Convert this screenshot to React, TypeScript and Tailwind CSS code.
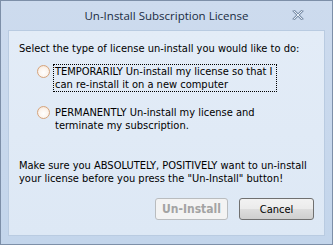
import React from 'react';

const Radio: React.FC = () => (
  <span className="mt-[1px] block h-[13px] w-[13px] shrink-0 rounded-full border border-[#d6a47c] bg-[radial-gradient(circle_at_50%_60%,#ffffff_0%,#fbf3ec_55%,#f0d8c4_100%)]" />
);

export default function App() {
  return (
    <div className="flex h-[245px] w-[333px] flex-col border border-[#7d8fa8] bg-[linear-gradient(#cddbee,#c3d5eb)] font-['DejaVu_Sans_Condensed','DejaVu_Sans',sans-serif] font-stretch-condensed text-[11px] leading-[13px] text-black">
      <div className="relative flex h-[29px] shrink-0 items-center justify-center">
        <span className="font-['Open_Sans',sans-serif] font-stretch-normal text-[11.5px] text-[#1a2b42]">Un-Install Subscription License</span>
        <svg className="absolute right-[28px] top-[9px]" width="12" height="10" viewBox="0 0 12 10">
          <path d="M2 1 L10 9 M10 1 L2 9" stroke="#7f93ad" strokeWidth="2.6" strokeLinecap="square" />
          <path d="M2 1 L10 9 M10 1 L2 9" stroke="#e8eef6" strokeWidth="1" strokeLinecap="square" />
        </svg>
      </div>
      <div className="mx-[7px] mb-[8px] flex flex-1 flex-col border border-[#b9cbe1] bg-[linear-gradient(#e3ecf7,#dde8f5)] px-[10px] pt-[11px]">
        <p className="whitespace-nowrap">Select the type of license un-install you would like to do:</p>
        <div className="mt-[9px] flex gap-[3px] pl-[18px]">
          <Radio />
          <p className="whitespace-nowrap border border-dotted border-black px-[1px] pr-[3px]">
            TEMPORARILY Un-install my license so that I
            <br />
            can re-install it on a new computer
          </p>
        </div>
        <div className="mt-[13px] flex gap-[3px] pl-[18px]">
          <Radio />
          <p className="whitespace-nowrap border border-transparent px-[1px]">
            PERMANENTLY Un-install my license and
            <br />
            terminate my subscription.
          </p>
        </div>
        <p className="mt-[26px] whitespace-nowrap">
          Make sure you ABSOLUTELY, POSITIVELY want to un-install
          <br />
          your license before you press the "Un-Install" button!
        </p>
        <div className="mt-[13px] flex justify-end gap-[11px]">
          <button className="h-[22px] w-[73px] rounded-[3px] border border-[#b9bcbf] bg-[#f3f3f3] text-[12px] font-bold text-[#a3a3a3]">
            Un-Install
          </button>
          <button className="h-[22px] w-[75px] rounded-[3px] border border-[#707070] bg-[linear-gradient(#f2f2f2_0%,#ebebeb_50%,#dddddd_51%,#cfcfcf_100%)] text-[11px] text-black">
            Cancel
          </button>
        </div>
      </div>
    </div>
  );
}
